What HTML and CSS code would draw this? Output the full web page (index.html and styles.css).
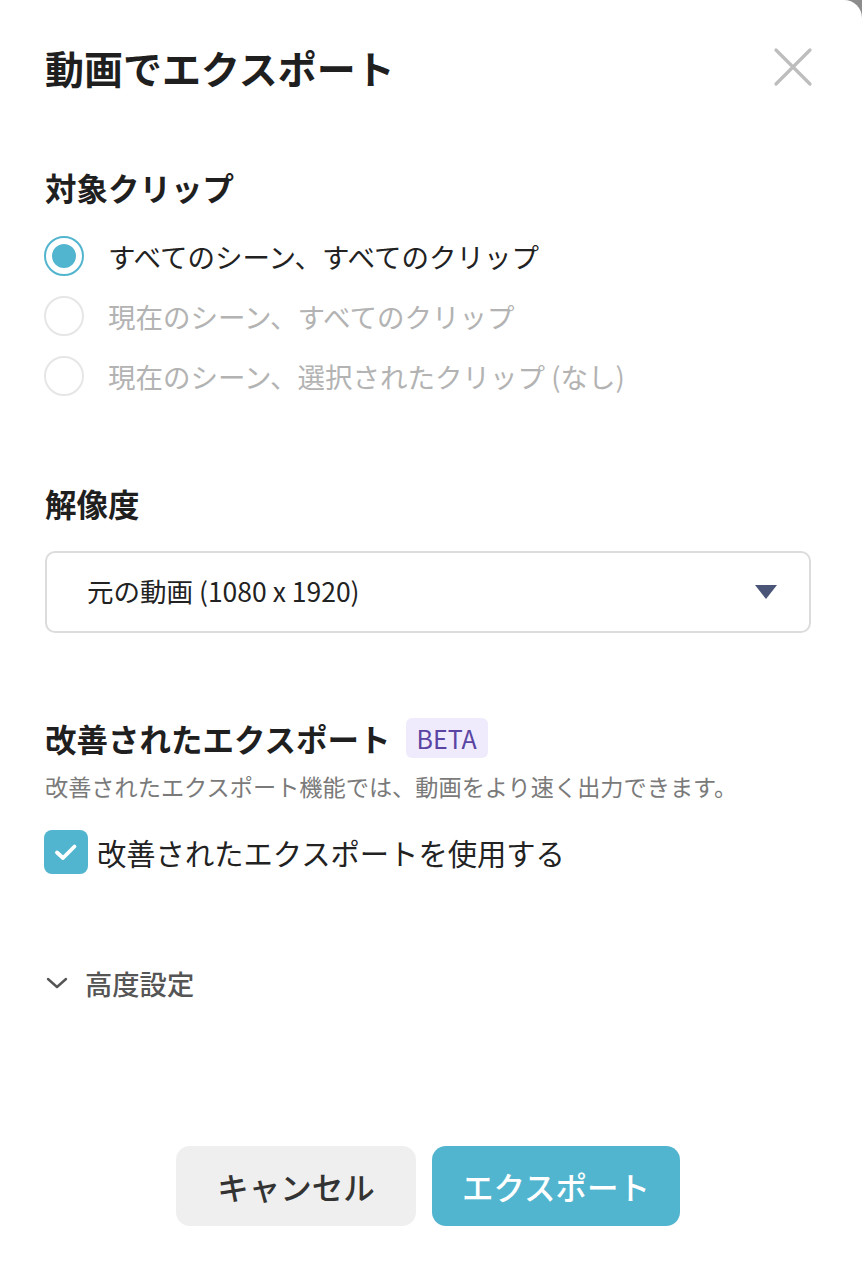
FILE: index.html
```html
<!DOCTYPE html>
<html lang="ja">
<head>
<meta charset="utf-8">
<link rel="stylesheet" href="styles.css">
</head>
<body>
<div class="dialog">
  <div class="header">
    <h1 class="title">動画でエクスポート</h1>
    <button class="close" aria-label="close">
      <svg width="40" height="40" viewBox="0 0 40 40"><path d="M3 3 L37 37 M37 3 L3 37" stroke="#bdbdbd" stroke-width="3.2" stroke-linecap="round" fill="none"/></svg>
    </button>
  </div>

  <section class="sec sec-clip">
    <h2 class="heading">対象クリップ</h2>
    <div class="radios">
      <label class="radio-row checked"><span class="radio"><span class="dot"></span></span><span class="radio-text">すべてのシーン、すべてのクリップ</span></label>
      <label class="radio-row disabled"><span class="radio"></span><span class="radio-text">現在のシーン、すべてのクリップ</span></label>
      <label class="radio-row disabled"><span class="radio"></span><span class="radio-text">現在のシーン、選択されたクリップ (なし)</span></label>
    </div>
  </section>

  <section class="sec sec-res">
    <h2 class="heading">解像度</h2>
    <div class="select">
      <span class="select-text">元の動画 (1080 x 1920)</span>
      <svg class="caret" width="22" height="14" viewBox="0 0 22 14"><path d="M0 0 H22 L11 14 Z" fill="#4a5578"/></svg>
    </div>
  </section>

  <section class="sec sec-imp">
    <div class="heading-row">
      <h2 class="heading">改善されたエクスポート</h2>
      <span class="badge">BETA</span>
    </div>
    <p class="desc">改善されたエクスポート機能では、動画をより速く出力できます。</p>
    <label class="check-row">
      <span class="checkbox">
        <svg width="28" height="28" viewBox="0 0 28 28"><path d="M5 14.5 L11 20 L22.5 8.5" stroke="#fff" stroke-width="3.8" stroke-linecap="round" stroke-linejoin="round" fill="none"/></svg>
      </span>
      <span class="check-text">改善されたエクスポートを使用する</span>
    </label>
  </section>

  <div class="advanced">
    <svg class="chev" width="22" height="14" viewBox="0 0 22 14"><path d="M2 3 L11 11 L20 3" stroke="#555" stroke-width="2.4" stroke-linecap="round" stroke-linejoin="round" fill="none"/></svg>
    <span class="adv-text">高度設定</span>
  </div>

  <div class="actions">
    <button class="btn btn-cancel">キャンセル</button>
    <button class="btn btn-export">エクスポート</button>
  </div>
</div>
</body>
</html>
```

FILE: styles.css
```css
html, body {
  margin: 0;
  padding: 0;
  background: #8c8c8c;
}
body {
  font-family: "Noto Sans CJK JP", "Noto Sans", sans-serif;
  color: #222;
}
.dialog {
  width: 862px;
  height: 1272px;
  box-sizing: border-box;
  background: #fff;
  border-top-right-radius: 18px;
  padding: 40px 51px 0 45px;
}
.header {
  display: flex;
  justify-content: space-between;
  align-items: center;
  height: 54px;
}
.title {
  margin: 0;
  font-size: 39px;
  line-height: 54px;
  font-weight: 700;
  color: #1f1f1f;
}
.close {
  border: 0;
  background: none;
  padding: 0;
  width: 40px;
  height: 40px;
  margin-right: -2px;
}
.close svg { display: block; }

.heading {
  margin: 0;
  font-size: 31.5px;
  line-height: 44px;
  font-weight: 700;
  color: #1f1f1f;
}
.sec-clip { margin-top: 71px; }
.radios {
  margin-top: 17px;
  display: flex;
  flex-direction: column;
}
.radio-row {
  display: flex;
  align-items: center;
  height: 60px;
}
.radio {
  width: 40px;
  height: 40px;
  box-sizing: border-box;
  border-radius: 50%;
  border: 2px solid #e6e6e6;
  display: flex;
  align-items: center;
  justify-content: center;
  margin-left: -1px;
}
.checked .radio { border-color: #52b5cf; }
.dot {
  width: 24px;
  height: 24px;
  border-radius: 50%;
  background: #52b5cf;
}
.radio-text {
  margin-left: 24px;
  font-size: 27.5px;
  line-height: 40px;
  color: #222;
}
.disabled .radio-text { color: #b3b3b3; }

.sec-res { margin-top: 75px; }
.select {
  margin-top: 26px;
  height: 82px;
  box-sizing: border-box;
  border: 2px solid #dcdcdc;
  border-radius: 10px;
  display: flex;
  align-items: center;
  justify-content: space-between;
  padding: 0 32px 0 40px;
}
.select-text {
  font-size: 26.5px;
  line-height: 40px;
  margin-top: -3px;
  color: #222;
}
.caret { display: block; margin-top: 0; }

.sec-imp { margin-top: 83px; }
.heading-row {
  display: flex;
  align-items: center;
  gap: 15px;
}
.badge {
  background: #efebfc;
  color: #5a44a3;
  font-size: 25px;
  line-height: 40px;
  height: 40px;
  padding: 0 11px;
  border-radius: 6px;
}
.desc {
  margin: 10px 0 0;
  font-size: 23.2px;
  line-height: 32px;
  color: #7a7a7a;
}
.check-row {
  margin-top: 28px;
  display: flex;
  align-items: center;
  height: 44px;
}
.checkbox {
  width: 44px;
  height: 44px;
  border-radius: 8px;
  background: #52b5cf;
  display: flex;
  align-items: center;
  justify-content: center;
  margin-left: -1px;
}
.checkbox svg { display: block; }
.check-text {
  margin-left: 9px;
  font-size: 29.3px;
  line-height: 44px;
  color: #222;
}

.advanced {
  margin-top: 89px;
  display: flex;
  align-items: center;
  height: 40px;
}
.chev { display: block; margin-left: 1px; }
.adv-text {
  margin-left: 17px;
  font-size: 27.3px;
  line-height: 40px;
  color: #555;
  font-weight: 500;
}

.actions {
  margin-top: 143px;
  display: flex;
  justify-content: center;
  gap: 16px;
}
.btn {
  border: 0;
  height: 80px;
  border-radius: 14px;
  font-family: "Noto Sans CJK JP", "Noto Sans", sans-serif;
  font-size: 31.5px;
  font-weight: 500;
  padding: 0;
}
.btn-cancel {
  width: 240px;
  background: #efefef;
  color: #333;
}
.btn-export {
  width: 248px;
  background: #52b5cf;
  color: #fff;
}
```
